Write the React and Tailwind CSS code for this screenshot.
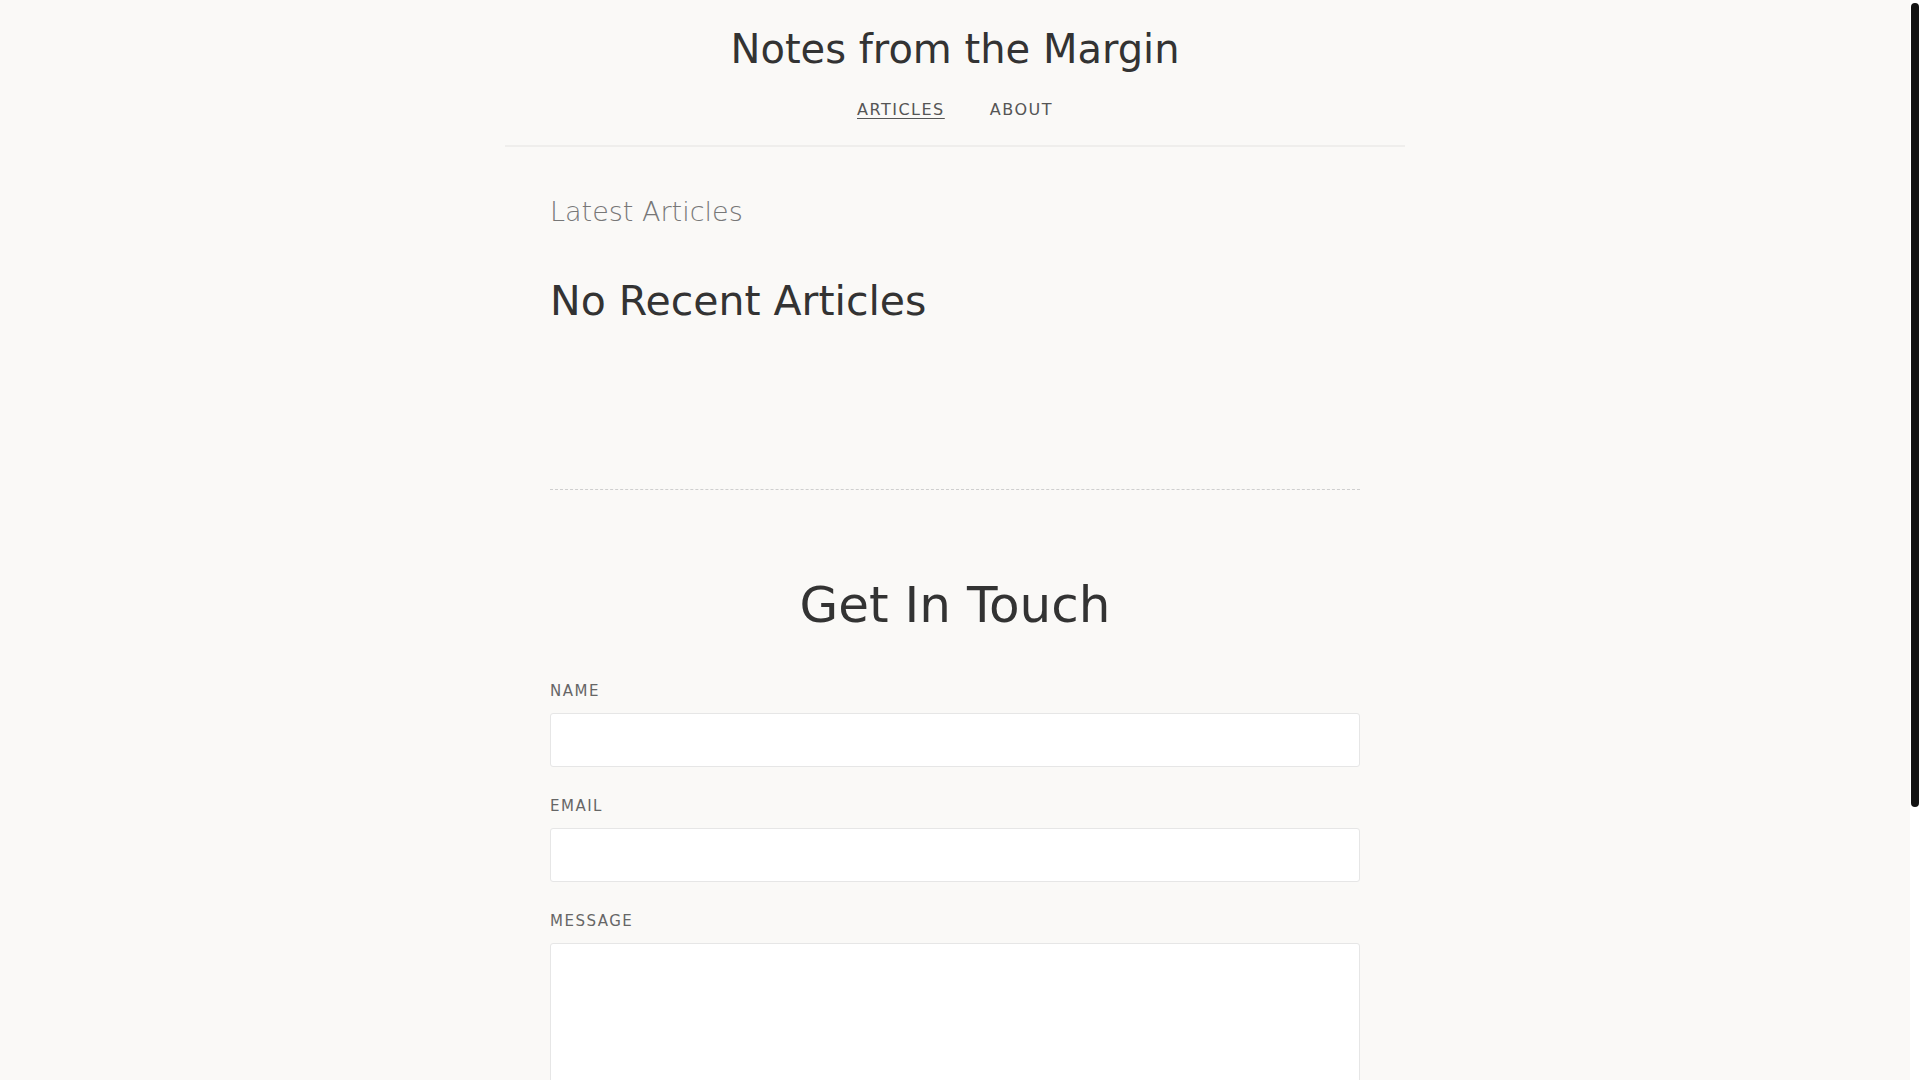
import React from "react";

const font = { fontFamily: '"DejaVu Sans", "Liberation Sans", sans-serif' };

const Field = ({ label, children }) => (
  <div className="flex flex-col">
    <label className="text-[15px] uppercase tracking-[1.5px] text-[#666] leading-[20px] mb-[12px]">
      {label}
    </label>
    {children}
  </div>
);

const App = () => {
  return (
    <div className="flex h-screen bg-[#faf9f7] text-[#333]" style={font}>
      <div className="flex-1 overflow-y-auto [scrollbar-width:none]">
        <header className="mx-auto w-[900px] border-b-2 border-[#efeeec] pt-[25px] pb-[24px] flex flex-col items-center">
          <h1 className="text-[40px] font-normal leading-[48px] text-[#333]">
            Notes from the Margin
          </h1>
          <nav className="mt-[26px] flex items-center gap-[45px] text-[16px] tracking-[1.5px] uppercase text-[#555] leading-[22px]">
            <a href="#" className="underline underline-offset-[3px]">
              Articles
            </a>
            <a href="#">About</a>
          </nav>
        </header>

        <main className="mx-auto w-[810px] pb-[300px]">
          <section className="pt-[48px]">
            <h2 className="text-[27px] font-light text-[#777] leading-[34px]">
              Latest Articles
            </h2>
            <h3 className="mt-[48px] text-[41px] font-medium text-[#333] leading-[48px]">
              No Recent Articles
            </h3>
            <div className="mt-[164px] border-t border-dashed border-[#cfcfcf]" />
          </section>

          <section className="pt-[85px]">
            <h2 className="text-center text-[50px] font-normal leading-[60px] text-[#333]">
              Get In Touch
            </h2>
            <form className="mt-[46px] flex flex-col gap-[29px]">
              <Field label="Name">
                <input
                  type="text"
                  className="h-[54px] w-full rounded-[3px] border border-[#e6e6e6] bg-white px-4 outline-none"
                />
              </Field>
              <Field label="Email">
                <input
                  type="email"
                  className="h-[54px] w-full rounded-[3px] border border-[#e6e6e6] bg-white px-4 outline-none"
                />
              </Field>
              <Field label="Message">
                <textarea className="h-[220px] w-full resize-none rounded-[3px] border border-[#e6e6e6] bg-white p-4 outline-none" />
              </Field>
            </form>
          </section>
        </main>
      </div>

      <div className="w-[10px] shrink-0 bg-white pt-[3px] pr-[1px] flex justify-end">
        <div className="h-[804px] w-[8px] rounded-full bg-[#111]" />
      </div>
    </div>
  );
};

export default App;
